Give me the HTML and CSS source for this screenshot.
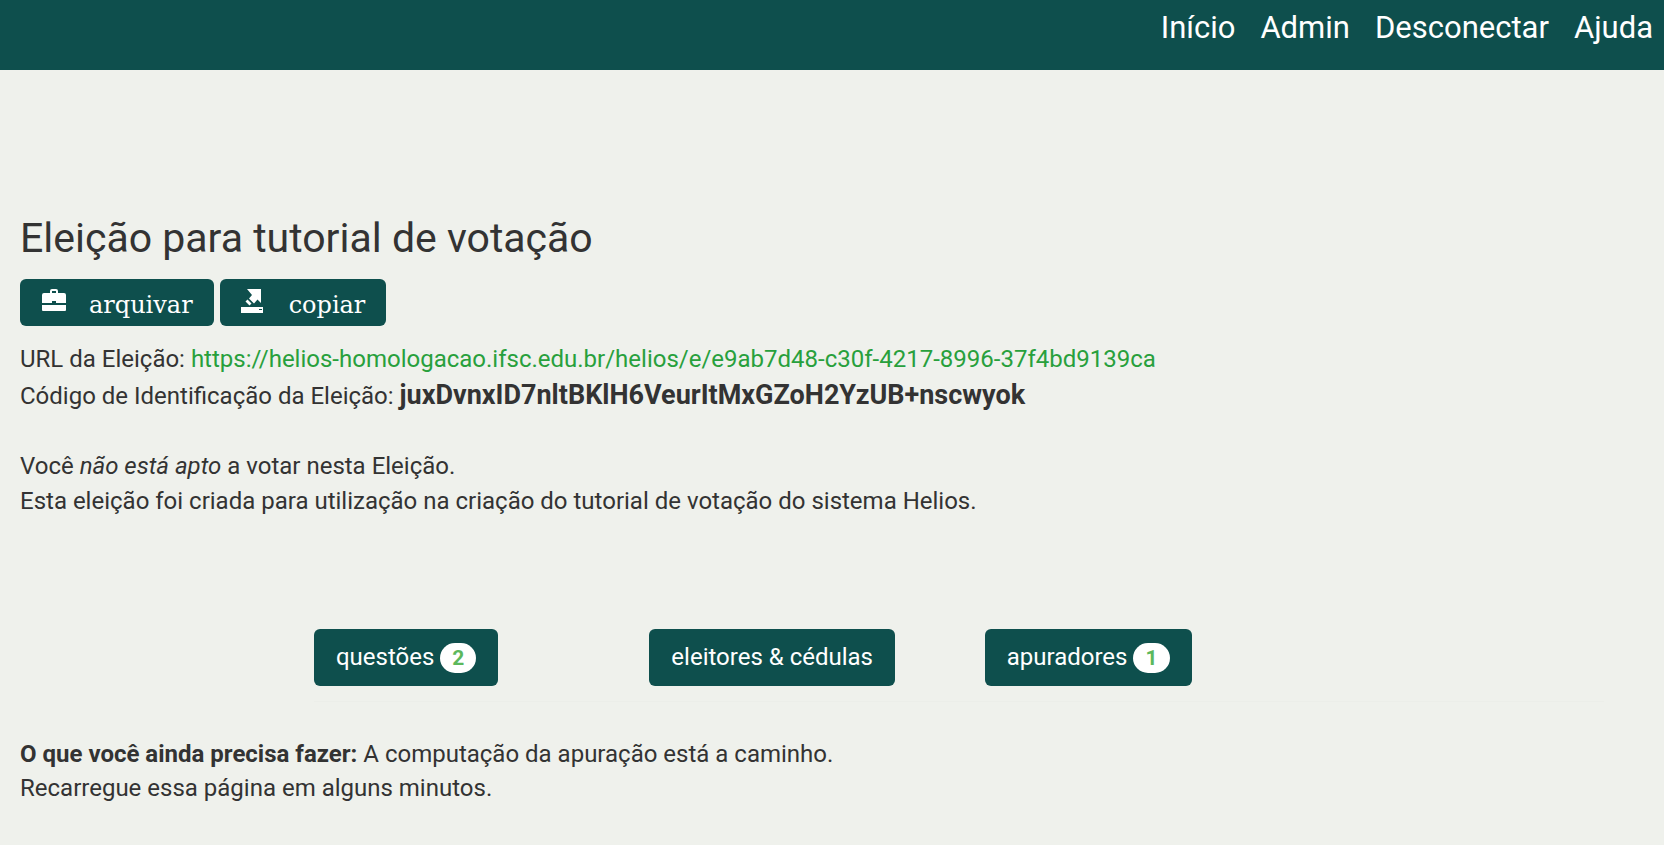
FILE: index.html
```
<!DOCTYPE html>
<html lang="pt-br">
  <head>
    <meta charset="UTF-8" />
    <meta name="viewport" content="width=device-width, initial-scale=1.0" />
    <title>Eleição para tutorial de votação</title>
    <link rel="stylesheet" href="styles.css">
  </head>
  <body>
    <nav class="topbar">
      <a href="#">Início</a>
      <a href="#">Admin</a>
      <a href="#">Desconectar</a>
      <a href="#">Ajuda</a>
    </nav>

    <main class="content">
      <h1>Eleição para tutorial de votação</h1>

      <div class="actions">
        <button type="button" class="btn btn-small">
          <svg class="icon" width="26" height="26" viewBox="0 0 26 26" fill="#fff" aria-hidden="true">
            <path d="M9 4V2q0-2 2-2h4q2 0 2 2v2h6q2 0 2 2v8H15v-2h-4v2H1V6q0-2 2-2zM11 4h4V2h-4zM1 16h24v5q0 1-1 1H2q-1 0-1-1z" />
          </svg>
          arquivar
        </button>
        <button type="button" class="btn btn-small">
          <svg class="icon" width="26" height="26" viewBox="0 0 26 26" fill="#fff" aria-hidden="true">
            <path d="M6 0h14v14l-3.500-3.500-3.500 4-5-5 3-3.500zM6.500 10.500l4 4-2 2-4-4zM0 18h22v6H0zM18 20v1h3v-1z" fill-rule="evenodd" />
          </svg>
          copiar
        </button>
      </div>

      <div class="info">
        <p>URL da Eleição: <a href="#">https://helios-homologacao.ifsc.edu.br/helios/e/e9ab7d48-c30f-4217-8996-37f4bd9139ca</a></p>
        <p class="code-line">Código de Identificação da Eleição: <b class="code">juxDvnxID7nltBKlH6VeurItMxGZoH2YzUB+nscwyok</b></p>
      </div>

      <div class="description">
        <p>Você <em>não está apto</em> a votar nesta Eleição.</p>
        <p>Esta eleição foi criada para utilização na criação do tutorial de votação do sistema Helios.</p>
      </div>

      <div class="options">
        <div><button type="button" class="btn">questões <span class="badge">2</span></button></div>
        <div><button type="button" class="btn">eleitores &amp; cédulas</button></div>
        <div><button type="button" class="btn">apuradores <span class="badge">1</span></button></div>
      </div>

      <div class="todo">
        <p><b>O que você ainda precisa fazer:</b> A computação da apuração está a caminho.</p>
        <p>Recarregue essa página em alguns minutos.</p>
      </div>
    </main>
  </body>
</html>
```
FILE: styles.css
```
* {
  box-sizing: border-box;
}
body {
  margin: 0;
  font-family: Roboto, sans-serif;
  font-size: 24px;
  line-height: 34px;
  color: #333;
  background-color: #eff1ec;
}
.topbar {
  display: flex;
  justify-content: flex-end;
  gap: 25px;
  min-height: 70px;
  padding: 11px 11px;
  background-color: #0e4f4d;
}
.topbar a {
  font-size: 31px;
  color: #fff;
  text-decoration: none;
}
.content {
  padding: 146px 20px 20px;
}
h1 {
  margin: 0 0 19px;
  font-size: 41px;
  font-weight: 400;
  line-height: 44px;
}
p {
  margin: 0;
}
.actions {
  display: flex;
  gap: 6px;
  margin-bottom: 16px;
}
.btn {
  padding: 10px 22px;
  font-family: inherit;
  font-size: 24px;
  line-height: 37px;
  color: #fff;
  background-color: #0e4f4d;
  border: none;
  border-radius: 6px;
  cursor: pointer;
}
.btn:hover {
  background-color: #0a3d3b;
}
.btn-small {
  display: flex;
  align-items: flex-start;
  gap: 22px;
  padding: 10px 21px 4px;
  font-family: "DejaVu Serif", serif;
  line-height: 33px;
}
.info a {
  color: #28a03c;
  text-decoration: none;
}
.info a:hover {
  text-decoration: underline;
}
.code-line {
  line-height: 38px;
}
.code {
  font-size: 27px;
}
.description {
  margin-top: 34px;
  line-height: 35px;
}
.options {
  display: grid;
  grid-template-columns: repeat(3, 26%);
  margin: 110px 40px 0 18.1%;
  padding-bottom: 15px;
  border-bottom: 1px solid #eceee9;
}
.badge {
  display: inline-block;
  padding: 5px 12px;
  font-size: 21px;
  font-weight: 700;
  line-height: 20px;
  color: #5cb85c;
  background-color: #fff;
  border-radius: 15px;
}
.todo {
  margin-top: 35px;
}
```
